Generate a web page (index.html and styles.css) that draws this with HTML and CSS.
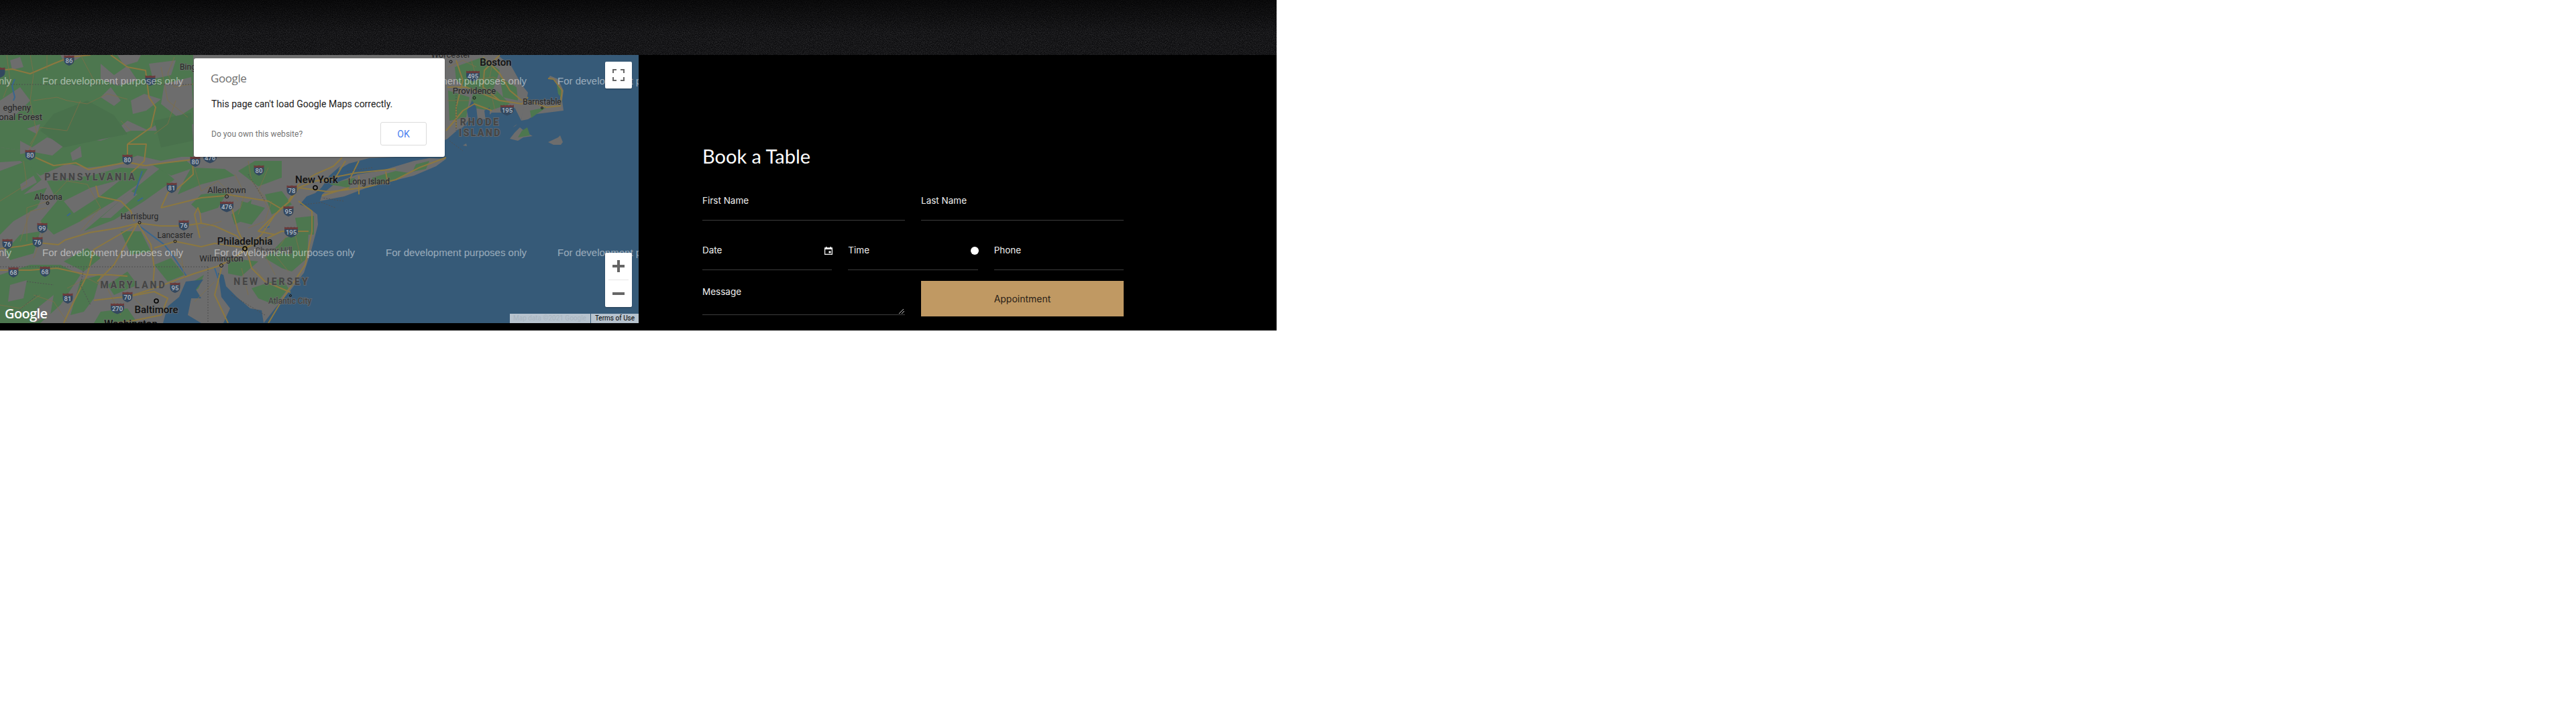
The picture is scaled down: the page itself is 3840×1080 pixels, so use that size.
FILE: index.html
```
<!DOCTYPE html>
<html lang="en">
<head>
<meta charset="utf-8">
<title>Book a Table</title>
<link rel="stylesheet" href="styles.css">
</head>
<body>
<div class="page">
  <header class="hero">
    <svg class="grain" width="1903" height="82" aria-hidden="true">
      <defs>
        <filter id="noise" x="0" y="0" width="100%" height="100%">
          <feTurbulence type="fractalNoise" baseFrequency="0.8" numOctaves="2" seed="7"/>
          <feColorMatrix type="matrix" values="0 0 0 0 0.2  0 0 0 0 0.2  0 0 0 0 0.21  0.55 0 0 0 -0.17"/>
        </filter>
        <linearGradient id="fade" x1="0" x2="0" y1="0" y2="1">
          <stop offset="0" stop-color="#000" stop-opacity=".6"/>
          <stop offset=".6" stop-color="#000" stop-opacity="0"/>
        </linearGradient>
      </defs>
      <rect width="1903" height="82" fill="#0b0b0d"/>
      <rect width="1903" height="82" filter="url(#noise)"/>
      <rect width="1903" height="82" fill="url(#fade)"/>
    </svg>
  </header>
  <section class="booking">
    <div class="map">
      <svg class="map-art" width="952" height="400" viewBox="0 82 952 400">
        <defs>
          <g id="s2"><path class="sh-r" d="M-7.5-7.5q3.7 1.6 7.500 0q3.700 1.600 7.500 0v3.500h-15z"/><path class="sh-b" d="M-7.500-4h15v4q0 5.500-7.500 8q-7.500-2.500-7.500-8z"/></g>
          <g id="s3"><path class="sh-r" d="M-10-7.500q3.300 1.600 5 0q2.500 1.600 5 0q2.500 1.600 5 0q1.700 1.600 5 0v3.500h-20z"/><path class="sh-b" d="M-10-4h20v5q-1 4.500-10 7.500q-9-3-10-7.500z"/></g>
        </defs>
        <rect class="sea" x="0" y="82" width="952" height="400"/>
        <path class="land" d="M0 82H742L763 100L778 127L787 138L785 150L780 163L777 180L767 160L763 170L748 168L733 168L723 178L700 177L690 190L683 193L667 207L650 216L625 226L590 234L550 236L520 244L497 258L485 275L470 288L457 293L447 305L460 310L473 320L474 335L472 343L463 377L453 407L433 433L410 460L393 482H0Z"/>
        <path class="land" d="M665 237L650 248L617 262L593 268L547 280L513 293L477 300L480 290L500 273L533 260L567 255L617 240L640 236Z"/>
        <path class="land" d="M783 152L800 150L830 153L835 150L835 133L825 118L817 117L820 113L832 118L840 135L838 150L840 165L800 170L787 178L777 180L779 165Z"/>
        <path class="land" d="M760 207L767 198L775 190L785 198L794 203L780 205L772 210Z M817 212L832 205L835 202L839 212L836 216L825 216Z M764 190L771 185L768 188Z M690 217L695 214L696 218Z"/>

        <path class="green" d="M0 82H288V190L250 176L220 194L190 180L160 205L130 190L100 214L70 205L40 225L0 220Z"/>
        <path class="green" d="M0 220L40 225L78 232L110 205L150 210L195 195L235 195L288 180V234L270 234L240 240L205 232L170 246L130 250L100 244L60 262L30 240L0 242Z"/>
        <path class="gray" d="M15 90L30 85L35 100L18 104Z M90 82H125L112 90L95 92Z M150 95L170 112L190 98L205 120L175 128L150 118Z M175 82H210L205 92L185 98Z M222 95L262 90L255 112L228 118Z M150 145L165 130L180 150L170 158Z M245 125L285 115L288 160L265 175L240 155Z M195 150L215 140L240 148L218 165L198 170Z M0 150L30 130L45 150L20 175L0 180Z M270 190L288 185V210L265 205Z M30 210L45 218L55 225L30 230Z M40 192L60 185L55 200Z M105 228L120 218L122 234L108 240Z"/>
        <path class="dkg" d="M80 170L130 150L170 172L190 200L150 208L95 220L60 195Z M230 180L285 168L288 210L240 220Z"/>

        <path class="green" d="M0 255L40 240L62 268L35 290L70 280L55 310L20 330L0 350Z"/>
        <path class="green" d="M70 270L135 262L180 250L220 252L205 275L170 300L120 330L80 350L60 330L85 300Z"/>
        <path class="green" d="M125 345L190 290L240 250L260 268L215 300L170 328Z"/>
        <path class="gray" d="M95 300L135 280L180 268L150 292L110 318Z M150 325L195 285L205 290L165 325Z M30 275L50 262L55 272L32 285Z M100 262L125 258L115 270Z"/>
        <path class="green" d="M225 245L278 240L290 250L255 262Z"/>
        <path class="green" d="M285 250L335 252L350 262L300 275L265 290L275 268Z"/>
        <path class="green" d="M300 290L340 285L325 310L300 318L285 305Z"/>
        <path class="green" d="M345 320L375 298L370 325L350 335Z"/>
        <path class="green" d="M355 255L380 240L420 240L420 265L385 278Z"/>
        <path class="green" d="M395 290L420 285L435 305L405 320Z"/>
        <path class="green" d="M360 300L395 310L375 335L355 330Z"/>
        <path class="green" d="M440 325L468 322L468 350L445 350Z"/>
        <path class="green" d="M425 355L460 345L458 385L435 405L420 400L395 385Z"/>
        <path class="green" d="M375 430L420 415L430 430L410 455L385 445Z"/>
        <path class="green" d="M340 385L385 390L360 412L340 408Z"/>
        <path class="green" d="M0 410L45 395L90 395L120 410L90 455L60 482H0Z"/>
        <path class="gray" d="M15 425L40 418L35 445L12 450Z M55 460L80 440L75 470L50 482Z"/>
        <path class="green" d="M95 390L130 370L150 385L125 405Z"/>
        <path class="green" d="M120 418L150 410L140 445L125 465L105 470Z"/>
        <path class="green" d="M30 350L60 345L50 378L15 388L8 375Z"/>
        <path class="green" d="M180 345L210 345L225 375L195 380Z"/>
        <path class="green" d="M160 425L190 405L205 425L170 440Z"/>
        <path class="green" d="M230 395L255 385L275 410L250 420Z"/>
        <path class="green" d="M150 465L190 460L205 482H140Z"/>
        <path class="green" d="M280 425L304 410L296 430L283 440Z"/>
        <path class="green" d="M555 265L590 255L610 258L590 268L555 275Z M490 275L530 265L520 280Z M620 245L640 240L635 252L615 256Z"/>
        <path class="green" d="M678 100L720 85L745 105L733 140L700 135L680 120Z"/>
        <path class="green" d="M705 140L740 135L760 155L730 165L700 160Z"/>
        <path class="green" d="M745 115L770 130L772 150L750 145Z"/>
        <path class="green" d="M790 165L815 160L800 170L792 176Z"/>
        <path class="green" d="M778 195L786 190L790 202L772 205Z"/>
        <path class="green" d="M830 126L836 133L838 147L832 140Z"/>
        <path class="green" d="M668 135L700 145L695 175L670 180Z"/>
        <path class="sea" d="M390 463L393 482H333L343 460L330 443L327 420L325 407L333 410L337 427L353 443L373 460Z"/>
        <path class="sea" d="M277 420L303 417L292 432L300 445L285 445L280 470L300 482H243L250 457L267 443Z"/>
        <path class="sea" d="M704 150L710 160L712 178L700 185L696 165Z M722 165L730 160L730 178L724 180Z M491 262L507 248L497 268L485 285L478 282Z"/>
        <path class="stream" d="M22 118L18 128L22 145L20 150M100 322L105 318M205 335L225 350L245 365L260 385L278 412M200 292L212 255M320 400L325 415M213 295L205 300M395 340L402 338"/>

        <g class="road">
          <path d="M0 105L18 103L45 110L80 95L105 85L135 82M165 82L190 100L217 105L222 145L232 160L225 190L190 215M190 215L190 235M190 215L218 215L215 240L195 258"/>
          <path d="M53 235L80 247L113 243L132 253L157 248L190 242L217 247L253 242L287 238"/>
          <path d="M0 371L33 367L57 362L87 365L97 358L133 347L177 340L207 333L240 337L273 337L300 333L320 337L353 352L367 370"/>
          <path d="M143 277L147 293L180 300L195 315L200 330M240 310L250 288L258 280M240 310L300 295L335 292L338 290M338 290L400 300L420 312"/>
          <path d="M287 238L288 260L275 272L260 285M190 242L215 247"/>
          <path d="M0 403L45 403L85 400L130 410L165 410L190 412M130 410L105 460L95 482"/>
          <path d="M193 442L230 430L270 415L290 408L325 397L350 385L367 370L390 350L410 320L432 300L445 280L470 270L500 268"/>
          <path d="M140 448L193 442L230 435L250 445L240 470L200 478L170 482"/>
          <path d="M205 333L225 365L230 400L228 425M205 333L170 395L145 420M207 333L140 372L130 410"/>
          <path d="M261 360L230 370M261 360L300 368L320 363L367 370"/>
          <path d="M300 333L298 318L295 310L290 320L298 355M345 308L355 345L367 370"/>
          <path d="M367 370L375 400L395 420L433 436M330 400L320 440L340 482"/>
          <path d="M367 370L420 345L460 345M410 350L385 345L420 310L432 300L445 280"/>
          <path d="M445 300L465 315L465 345L455 395L425 440L400 482"/>
          <path d="M430 300L445 275L470 260L497 248L510 235M445 280L490 286L510 284L547 279L590 268L625 250L665 235M470 270L530 258L590 252M480 292L520 280"/>
          <path d="M535 262L535 290M500 265L515 240M520 270L535 240M575 256L578 273"/>
          <path d="M665 195L690 165L707 155L733 165M667 130L695 130L745 150L778 155L787 145M680 90L690 120L680 160L680 190M720 85L745 110L760 135L778 150M745 82L722 105L720 130L745 150"/>
          <path d="M785 150L815 160L835 158L838 135L825 118L817 117"/>
        </g>
        <g class="minor">
          <path d="M10 82L15 120L5 145M45 82L50 110L45 150L55 200L40 230M50 150L85 145L100 150L130 155L160 140L190 148M70 82L70 105M120 82L140 120L150 125M260 85L250 110L260 130L290 125M240 100L250 150L280 175M120 150L100 195L60 190L45 215M180 180L195 195M262 150L250 185L230 200"/>
          <path d="M0 300L40 275L35 240M72 300L40 310L40 360M72 300L100 270L130 275L150 310L120 330M30 360L45 315L70 310M60 330L65 345L50 385M150 310L120 345M290 250L300 285L325 270L355 300M370 240L375 270L395 295M400 250L385 285L400 310M350 260L365 290L355 320M405 300L395 330L370 340M435 340L415 370L395 380L410 410M300 340L330 330M255 375L275 400M270 380L275 415M100 430L130 415L160 430L180 470M50 440L80 450L100 480M200 445L225 470M0 455L30 460L60 440M320 420L290 450M360 400L370 440M380 400L400 425M410 380L430 405M440 350L450 390"/>
          <path d="M668 100L690 90L710 100M700 120L735 115L760 125M730 130L738 165M667 150L700 150M702 88L710 115M735 90L730 115"/>
        </g>
        <g class="dash">
          <path d="M0 126L288 126M0 398L310 398M310 398L310 480M125 400L120 425L135 455M40 420L80 425M455 305L480 302L500 310M512 300L480 295M555 250L515 256M370 260L395 300M680 130V195M670 210L690 225M395 470L345 440M55 440L20 470"/>
        </g>

        <g class="t-state">
          <text x="135" y="269" class="ls3">PENNSYLVANIA</text>
          <text x="199" y="430" class="ls3">MARYLAND</text>
          <text x="405" y="425" class="ls3">NEW JERSEY</text>
          <text x="716" y="187" class="ls3">RHODE</text>
          <text x="716" y="203" class="ls2">ISLAND</text>
        </g>
        <g class="t-city">
          <text x="72" y="298">Altoona</text>
          <text x="208" y="327">Harrisburg</text>
          <text x="261" y="355">Lancaster</text>
          <text x="338" y="288" class="m">Allentown</text>
          <text x="330" y="390" class="m">Wilmington</text>
          <text x="550" y="275">Long Island</text>
          <text x="408" y="378" class="dim">Cherry Hill</text>
          <text x="432" y="453" class="dim">Atlantic City</text>
          <text x="707" y="140" class="m">Providence</text>
          <text x="808" y="156">Barnstable</text>
          <text x="672" y="86" class="m">Worcester</text>
          <text x="280" y="104">Bing</text>
          <text x="46" y="165" class="m end">egheny</text>
          <text x="63" y="179" class="m end">onal Forest</text>
        </g>
        <g class="t-big">
          <text x="472" y="273">New York</text>
          <text x="365" y="365">Philadelphia</text>
          <text x="233" y="467">Baltimore</text>
          <text x="739" y="98">Boston</text>
          <text x="195" y="488">Washington</text>
        </g>
        <g class="dot">
          <circle cx="71" cy="303" r="2"/><circle cx="208" cy="332" r="2"/><circle cx="261" cy="360" r="2"/>
          <circle cx="338" cy="293" r="2.500"/><circle cx="330" cy="396" r="2.500"/><circle cx="433" cy="441" r="1.500"/>
          <circle cx="707" cy="146" r="2"/><circle cx="808" cy="161" r="1.500"/><circle cx="672" cy="92" r="2"/>
        </g>
        <g class="dot big">
          <circle cx="470" cy="280" r="3"/><circle cx="365" cy="371" r="3"/><circle cx="233" cy="449" r="3"/>
        </g>
        <use href="#s2" x="103" y="90"/><use href="#s2" x="224" y="120"/><use href="#s2" x="45" y="231"/><use href="#s2" x="190" y="238"/>
        <use href="#s2" x="291" y="241"/><use href="#s3" x="313" y="235"/><use href="#s2" x="386" y="254"/><use href="#s2" x="435" y="284"/>
        <use href="#s2" x="256" y="280"/><use href="#s3" x="338" y="308"/><use href="#s2" x="430" y="315"/><use href="#s3" x="434" y="346"/>
        <use href="#s2" x="274" y="336"/><use href="#s2" x="63" y="340"/><use href="#s2" x="56" y="361"/><use href="#s2" x="11" y="364"/>
        <use href="#s2" x="20" y="406"/><use href="#s2" x="67" y="405"/><use href="#s2" x="261" y="429"/><use href="#s2" x="101" y="445"/>
        <use href="#s2" x="190" y="443"/><use href="#s3" x="175" y="460"/><use href="#s3" x="705" y="113"/><use href="#s3" x="756" y="164"/>
        <use href="#s2" x="0" y="108"/>
        <g class="t-shield">
          <text x="103" y="94">86</text><text x="45" y="235">80</text><text x="190" y="242">80</text>
          <text x="291" y="245">80</text><text x="313" y="239">476</text><text x="386" y="258">80</text><text x="435" y="288">78</text>
          <text x="256" y="284">81</text><text x="338" y="312">476</text><text x="430" y="319">95</text><text x="434" y="350">195</text>
          <text x="274" y="340">76</text><text x="63" y="344">99</text><text x="56" y="365">76</text><text x="11" y="368">76</text>
          <text x="20" y="410">68</text><text x="67" y="409">68</text><text x="261" y="433">95</text><text x="101" y="449">81</text>
          <text x="190" y="447">70</text><text x="175" y="464">270</text><text x="705" y="117">495</text><text x="756" y="168">195</text>
        </g>
        <g class="t-water">
          <text x="-193" y="126">For development purposes only</text><text x="63" y="126">For development purposes only</text><text x="575" y="126">For development purposes only</text><text x="831" y="126">For development purposes only</text>
          <text x="-193" y="382">For development purposes only</text><text x="63" y="382">For development purposes only</text><text x="319" y="382">For development purposes only</text><text x="575" y="382">For development purposes only</text><text x="831" y="382">For development purposes only</text>
        </g>
        <text class="t-logo" x="7" y="475">Google</text>
      </svg>

      <div class="dialog">
        <div class="dialog-logo">Google</div>
        <p class="dialog-msg">This page can't load Google Maps correctly.</p>
        <div class="dialog-foot">
          <span class="dialog-own">Do you own this website?</span>
          <button class="dialog-ok" type="button">OK</button>
        </div>
      </div>

      <button class="ctl ctl-full" type="button" aria-label="Toggle fullscreen">
        <svg width="18" height="18" viewBox="0 0 18 18"><path class="ic" d="M0 6V0H6V2H2V6ZM12 0H18V6H16V2H12ZM0 12H2V16H6V18H0ZM16 12H18V18H12V16H16Z"/></svg>
      </button>
      <div class="ctl ctl-zoom">
        <button class="zoom-btn" type="button" aria-label="Zoom in"><svg width="18" height="18" viewBox="0 0 18 18"><path class="ic" d="M7 0H11V7H18V11H11V18H7V11H0V7H7Z"/></svg></button>
        <span class="zoom-sep"></span>
        <button class="zoom-btn" type="button" aria-label="Zoom out"><svg width="18" height="18" viewBox="0 0 18 18"><path class="ic" d="M0 7H18V11H0Z"/></svg></button>
      </div>
      <div class="attrib">
        <span class="attrib-data">Map data ©2021 Google</span>
        <span class="attrib-terms">Terms of Use</span>
      </div>
    </div>

    <form class="book">
      <h2 class="book-title">Book a Table</h2>
      <div class="row row-a">
        <div class="field"><label>First Name</label></div>
        <div class="field"><label>Last Name</label></div>
      </div>
      <div class="row row-b">
        <div class="field"><label>Date</label>
          <svg class="pick-cal" width="12" height="12" viewBox="0 0 12 12"><path d="M2 0H3.500V1.200H8.500V0H10V1.200H12V12H0V1.200H2ZM1.200 4V10.800H10.800V4ZM6.500 6.500H9.500V9.500H6.500Z" fill-rule="evenodd"/></svg>
        </div>
        <div class="field"><label>Time</label><span class="pick-time"></span></div>
        <div class="field"><label>Phone</label></div>
      </div>
      <div class="row row-c">
        <div class="field field-msg"><label>Message</label>
          <svg class="grip" width="8" height="7" viewBox="0 0 8 7"><path d="M0 7L7 0M4 7L8 3"/></svg>
        </div>
        <button class="submit" type="button">Appointment</button>
      </div>
    </form>
  </section>
</div>
</body>
</html>
```
FILE: styles.css
```
* { box-sizing: border-box; }
html, body { margin: 0; background: #fff; }
.page { width: 1903px; background: #000; height: 493px; overflow: hidden; }
.hero { height: 82px; background: #0b0b0d; }
.grain { display: block; }
.booking { display: flex; align-items: flex-start; }

/* map canvas */
.map { position: relative; width: 952px; height: 400px; flex: none; overflow: hidden; background: #365a78; }
.map-art { display: block; }
.sea { fill: #365a78; }
.land, .gray { fill: #6d6d6d; }
.green { fill: #4d774f; }
.dkg { fill: #49714c; }
.stream { fill: none; stroke: #38668f; stroke-width: 2; }
.road path { fill: none; stroke: #8c7840; stroke-width: 2; stroke-linejoin: round; }
.minor path { fill: none; stroke: #7f6f47; stroke-width: 1; opacity: .8; }
.dash path { fill: none; stroke: #4f4f4f; stroke-width: 1; stroke-dasharray: 2 2; }
.sh-r { fill: #6a3b3c; }
.sh-b { fill: #33485f; }
.t-state text { font: 700 14px Roboto, sans-serif; fill: #444; text-anchor: middle; stroke: rgba(109, 109, 109, .8); stroke-width: 2px; paint-order: stroke; }
.ls3 { letter-spacing: 3px; }
.ls2 { letter-spacing: 2.500px; }
.t-city text { font: 400 12px Roboto, sans-serif; fill: #262626; text-anchor: middle; stroke: rgba(109, 109, 109, .7); stroke-width: 2px; paint-order: stroke; }
.t-city .m { font-size: 13px; }
.t-city .end { text-anchor: end; }
.t-city .dim { fill: #3d3d3d; }
.t-big text { font: 500 15px Roboto, sans-serif; fill: #111; text-anchor: middle; stroke: rgba(109, 109, 109, .7); stroke-width: 2px; paint-order: stroke; }
.dot circle { fill: none; stroke: #151515; stroke-width: 1; }
.dot.big circle { stroke-width: 1.500; stroke: #000; }
.t-shield text { font: 500 9.500px Roboto, sans-serif; fill: #b4bcc6; text-anchor: middle; }
.t-water text { font: 400 15px "Liberation Sans", sans-serif; fill: rgba(255, 255, 255, .5); }
.t-logo { font: 600 20px "Open Sans", sans-serif; fill: #fff; letter-spacing: -.6px; }

.dialog { position: absolute; left: 289px; top: 5px; width: 374px; height: 147px; background: #fff; border-radius: 3px; box-shadow: 0 1px 2px rgba(0, 0, 0, .3); padding: 18px 27px 0 25px; }
.dialog-logo { font: 400 17px/24px "Open Sans", sans-serif; color: #6f6f6f; letter-spacing: -.4px; }
.dialog-msg { margin: 16px 0 0 1px; font: 400 14px/20px Roboto, sans-serif; color: #1a1a1a; }
.dialog-foot { display: flex; justify-content: space-between; align-items: center; margin-top: 17px; padding-left: 1px; }
.dialog-own { font: 400 12px/16px Roboto, sans-serif; color: #757575; letter-spacing: .05px; }
.dialog-ok { width: 69px; height: 35px; padding: 0; background: #fff; border: 1px solid #dcdcdc; border-radius: 3px; font: 400 14px Roboto, sans-serif; color: #4a7ff0; }

.ctl { position: absolute; left: 902px; width: 40px; background: #fff; border: 0; border-radius: 2px; padding: 0; box-shadow: 0 1px 2px rgba(0, 0, 0, .3); }
.ctl-full { top: 10px; height: 40px; display: flex; align-items: center; justify-content: center; }
.ctl-zoom { top: 295px; height: 81px; display: flex; flex-direction: column; align-items: center; }
.zoom-btn { width: 40px; height: 40px; border: 0; padding: 0; background: none; display: flex; align-items: center; justify-content: center; }
.zoom-sep { width: 30px; height: 1px; background: #e6e6e6; flex: none; }
.ic { fill: #666; }
.attrib { position: absolute; right: 0; bottom: 0; display: flex; gap: 1px; height: 14px; font: 400 10px/14px Roboto, sans-serif; }
.attrib-data { width: 120px; background: #b7c3ce; color: #a9b5c0; padding-left: 5px; white-space: nowrap; overflow: hidden; }
.attrib-terms { width: 71px; background: #b7c3ce; color: #000; text-align: center; }

/* booking form */
.book { width: 951px; padding: 133px 0 0 95px; color: #fff; }
.book-title { margin: 0 0 33px; font: 400 29px/36px Lato, sans-serif; color: #fff; }
.row { display: flex; gap: 24px; width: 628px; }
.row-a { margin-bottom: 29px; }
.row-b { margin-bottom: 16px; }
.field { position: relative; flex: 1 1 0; height: 45px; padding-top: 5px; border-bottom: 1px solid #3c3c3c; }
.field label { display: block; font: 400 13.500px/20px Inter, sans-serif; color: #f0f0f0; }
.field-msg { height: 51px; padding-top: 6px; }
.pick-cal { position: absolute; right: -1px; top: 10px; fill: #fff; }
.pick-time { position: absolute; right: -1px; top: 10px; width: 12px; height: 12px; border-radius: 50%; background: #fff; }
.grip { position: absolute; right: 1px; bottom: 1px; fill: none; stroke: #c8c8c8; stroke-width: 1; }
.submit { flex: 1 1 0; height: 53px; padding: 0; border: 0; background: #c09963; font: 400 14px Inter, sans-serif; color: #2a2117; }
```
